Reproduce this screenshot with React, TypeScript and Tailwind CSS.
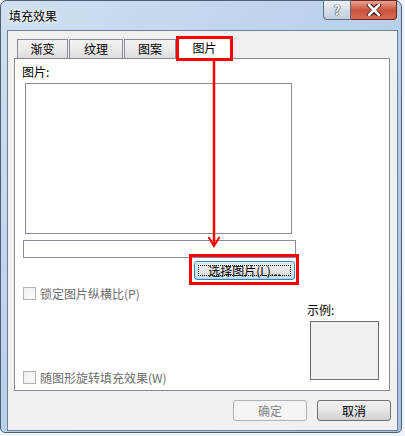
import React from "react";

const F = "font-['Noto_Sans_CJK_SC','Noto_Sans',sans-serif]";

function Tab({ label, w, ml }: { label: string; w: string; ml: string }) {
  return (
    <div
      className={`${w} ${ml} h-[19px] border border-b-0 border-[#898c95] bg-gradient-to-b from-[#f3f3f3] via-[#ebebeb] to-[#dcdcdc] flex items-center justify-center text-[12px] leading-none text-black`}
    >
      {label}
    </div>
  );
}

function Checkbox({ label }: { label: string }) {
  return (
    <div className="flex items-center gap-[4px] text-[12px] leading-none text-[#6d6d6d]">
      <div className="w-[13px] h-[13px] border border-[#b1b1b1] bg-gradient-to-br from-[#f0f0f0] to-[#fbfbfb]" />
      <span>{label}</span>
    </div>
  );
}

export default function App() {
  return (
    <div
      className={`${F} relative w-[405px] h-[436px] overflow-hidden bg-[#eef3f9]`}
    >
      <div className="absolute inset-0 right-[3px] bottom-[3px] rounded-t-[7px] rounded-b-[5px] border border-[#4d5f75] bg-gradient-to-br from-[#cfe0f2] via-[#b8d0ea] to-[#a7c2e2]">
        {/* title bar */}
        <div className="h-[29px] flex items-center pl-[8px]">
          <span className="text-[12px] text-black leading-none [text-shadow:0_0_6px_#ffffff,0_0_3px_#ffffff]">
            填充效果
          </span>
        </div>
        {/* caption buttons */}
        <div className="absolute top-[-1px] right-[4px] flex">
          <div className="w-[28px] h-[20px] rounded-bl-[4px] border border-[#5d6d80] bg-gradient-to-b from-[#eef2f6] via-[#d5dde7] to-[#c2cfdd] flex items-center justify-center text-[13px] font-bold text-white [text-shadow:0_0_1px_#2d3a48,0_0_1px_#2d3a48,0_0_1px_#2d3a48]">
            ?
          </div>
          <div className="w-[46px] h-[20px] rounded-br-[4px] border border-l-0 border-[#6b2a1d] bg-gradient-to-b from-[#e8a493] via-[#c9533a] to-[#d86a4f] flex items-center justify-center">
            <svg width="16" height="12" viewBox="0 0 16 12">
              <path
                d="M3 1 L8 5 L13 1 M3 11 L8 7 L13 11"
                stroke="#3a1a14"
                strokeWidth="4.5"
                fill="none"
                strokeLinecap="round"
              />
              <path
                d="M3 1 L13 11 M13 1 L3 11"
                stroke="#ffffff"
                strokeWidth="2.6"
                fill="none"
                strokeLinecap="round"
              />
            </svg>
          </div>
        </div>

        {/* client area */}
        <div className="ml-[6px] w-[391px] h-[401px] border border-[#6f8092] bg-[#f0f0f0] pl-[6px] pt-[5px]">
          {/* tabs */}
          <div className="flex items-end h-[22px]">
            <Tab label="渐变" w="w-[51px]" ml="ml-[3px]" />
            <Tab label="纹理" w="w-[54px]" ml="ml-[1px]" />
            <Tab label="图案" w="w-[52px]" ml="ml-[1px]" />
            <div className="relative z-10 ml-[1px] w-[55px] h-[23px] -mb-[1px] border border-b-0 border-[#898c95] bg-white flex items-center justify-center text-[12px] leading-none text-black">
              图片
              <div className="absolute -left-[2px] -right-[2px] -top-[1px] h-[25px] border-[3px] border-[#ff0000]" />
            </div>
          </div>

          {/* panel */}
          <div className="relative w-[376px] h-[333px] border border-[#898c95] bg-white flex flex-col">
            <div className="ml-[7px] mt-[6px] h-[14px] text-[12px] leading-[14px] text-black">
              图片:
            </div>
            <div className="ml-[10px] mt-[4px] w-[267px] h-[151px] border border-[#898c94] bg-white" />
            <div className="ml-[8px] mt-[6px] w-[273px] h-[18px] border border-[#898c94] bg-white" />
            <div className="ml-[179px] mt-[3px] relative w-[101px] h-[19px]">
              <div className="absolute -left-[5px] -top-[7px] w-[110px] h-[31px] border-[3px] border-[#ff0000]" />
              <div className="relative w-full h-full rounded-[3px] border border-[#3c7fb1] bg-gradient-to-b from-[#eaf6fd] via-[#d9f0fc] to-[#a7d9f5] p-[1px]">
                <div className="w-full h-full rounded-[2px] border border-[#bee6fd] bg-gradient-to-b from-[#f2f2f2] via-[#e6e6e6] to-[#d2d2d2] p-[1px]">
                  <div className="w-full h-full border border-dotted border-black flex items-center justify-center text-[12px] leading-none text-black">
                    选择图片(L)...
                  </div>
                </div>
              </div>
            </div>
            <div className="ml-[8px] mt-[7px]">
              <Checkbox label="锁定图片纵横比(P)" />
            </div>
            <div className="flex flex-1 pb-[6px]">
              <div className="flex flex-col justify-end ml-[8px] w-[276px]">
                <Checkbox label="随图形旋转填充效果(W)" />
              </div>
              <div className="flex flex-col ml-[8px] pt-[3px]">
                <div className="text-[12px] leading-[14px] text-black">示例:</div>
                <div className="ml-[3px] mt-[4px] w-[69px] h-[59px] border border-[#6d6d6d] bg-[#f0f0f0]" />
              </div>
            </div>
          </div>

          {/* buttons */}
          <div className="flex justify-end gap-[10px] mr-[6px] mt-[9px]">
            <div className="w-[74px] h-[21px] rounded-[3px] border border-[#adb2b5] bg-[#f4f4f4] flex items-center justify-center text-[12px] leading-none text-[#838383]">
              确定
            </div>
            <div className="w-[74px] h-[21px] rounded-[3px] border border-[#707070] bg-gradient-to-b from-[#f2f2f2] via-[#e6e6e6] to-[#cfcfcf] flex items-center justify-center text-[12px] leading-none text-black">
              取消
            </div>
          </div>
        </div>
      </div>

      {/* red arrow */}
      <svg
        className="absolute left-0 top-0 pointer-events-none"
        width="405"
        height="436"
        viewBox="0 0 405 436"
      >
        <path d="M214 60 L214 245" stroke="#ff0000" strokeWidth="2.5" fill="none" />
        <path
          d="M208.5 237 L214 246 L219.5 237"
          stroke="#ff0000"
          strokeWidth="2"
          fill="none"
        />
      </svg>
    </div>
  );
}
